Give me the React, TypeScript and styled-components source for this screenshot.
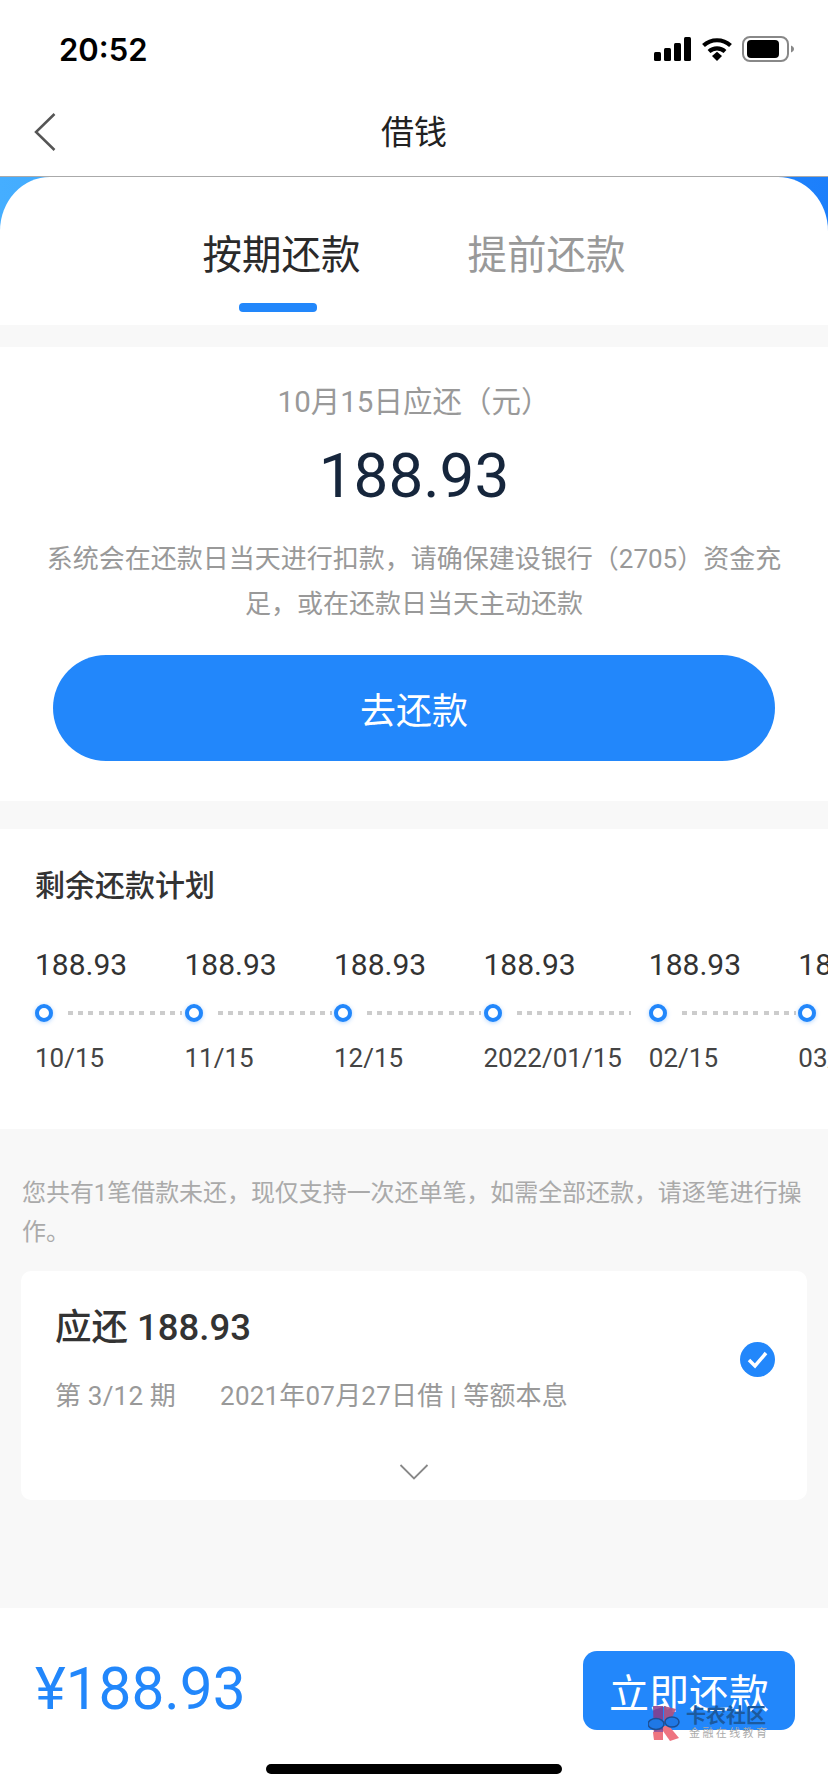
import styled, { createGlobalStyle } from "styled-components";

const BLUE = "#2287fb";
const FONT = `Roboto, "Noto Sans CJK SC", sans-serif`;

const GlobalStyle = createGlobalStyle`
	html, body {
		margin: 0;
		padding: 0;
		background: #fff;
	}

	body {
		font-family: ${FONT};
		overflow: hidden;
	}

	* {
		box-sizing: border-box;
	}
`;

const Page = styled.div`
	width: 828px;
	height: 1792px;
	display: flex;
	flex-direction: column;
	overflow: hidden;
	background: #f8f8f8;
`;

const StatusBar = styled.div`
	height: 88px;
	padding: 10px 34px 0 59px;
	display: flex;
	align-items: center;
	justify-content: space-between;
	background: #fff;
`;

const Time = styled.span`
	font-family: Inter, sans-serif;
	font-size: 31px;
	font-weight: 600;
	color: #000;
`;

const StatusIcons = styled.div`
	display: flex;
	align-items: center;
	gap: 9px;
`;

const NavBar = styled.div`
	height: 89px;
	padding-bottom: 1px;
	display: grid;
	grid-template-columns: 1fr auto 1fr;
	align-items: center;
	background: #fff;
	border-bottom: 1px solid #aaa;
`;

const BackIcon = styled.svg`
	margin-left: 34px;
`;

const NavTitle = styled.div`
	padding-bottom: 4px;
	font-size: 33px;
	color: #222;
`;

const Hero = styled.div`
	background: linear-gradient(90deg, #45aeff 0%, #1c7ffb 100%);
`;

const TabCard = styled.div`
	height: 148px;
	padding-top: 51px;
	display: flex;
	justify-content: center;
	gap: 107px;
	background: #fff;
	border-radius: 50px 50px 0 0 / 54px 54px 0 0;
`;

const Tab = styled.div`
	width: 158px;
	display: flex;
	flex-direction: column;
`;

const TabLabel = styled.span<{ $active?: boolean }>`
	font-size: 39.5px;
	line-height: 56px;
	white-space: nowrap;
	color: ${({ $active }) => ($active ? "#2a2a2a" : "#999")};
`;

const TabIndicator = styled.div`
	width: 78px;
	height: 9px;
	margin: 19px 0 0 36px;
	border-radius: 4px;
	background: ${BLUE};
`;

const RepaySection = styled.section`
	height: 454px;
	margin-top: 22px;
	padding-top: 34px;
	display: flex;
	flex-direction: column;
	align-items: center;
	background: #fff;
`;

const DueLabel = styled.div`
	font-size: 29.5px;
	line-height: 42px;
	color: #999;
`;

const DueAmount = styled.div`
	margin-top: 16px;
	font-size: 62px;
	line-height: 74px;
	color: #16263c;
`;

const Notice = styled.p`
	width: 744px;
	margin: 24px 0 0;
	font-size: 26px;
	line-height: 45px;
	text-align: center;
	color: #999;
`;

const PrimaryButton = styled.div`
	width: 722px;
	height: 106px;
	margin-top: 28px;
	display: flex;
	align-items: center;
	justify-content: center;
	font-size: 36px;
	color: #fff;
	border-radius: 53px;
	background: ${BLUE};
`;

const PlanSection = styled.section`
	height: 300px;
	margin-top: 28px;
	padding: 36px 0 0 35px;
	overflow: hidden;
	background: #fff;
`;

const PlanTitle = styled.div`
	font-size: 30px;
	line-height: 42px;
	font-weight: 500;
	color: #333;
`;

const Timeline = styled.div`
	margin-top: 40px;
	display: flex;
	width: 1000px;
`;

const TimelineItem = styled.div`
	flex: none;
	min-width: 149.5px;
`;

const ItemAmount = styled.div`
	font-size: 30px;
	line-height: 36px;
	color: #333;
`;

const DotRow = styled.div`
	margin-top: 21px;
	display: flex;
	align-items: center;
	gap: 15px;
`;

const Dot = styled.span`
	flex: none;
	width: 18px;
	height: 18px;
	border: 4px solid ${BLUE};
	border-radius: 50%;
	background: #fff;
	box-shadow: 0 1px 4px rgba(34, 135, 251, 0.35);
`;

const DotLine = styled.span`
	flex: none;
	width: 114px;
	height: 4px;
	background: repeating-linear-gradient(90deg, #ccc 0 5px, transparent 5px 10.2px);
`;

const ItemDate = styled.div`
	margin-top: 18px;
	padding-right: 27px;
	font-size: 26px;
	line-height: 36px;
	white-space: nowrap;
	color: #444;
`;

const LoanSection = styled.section`
	height: 479px;
	padding: 45px 21px 0 21px;
	background: #f8f8f8;
`;

const LoanNotice = styled.p`
	margin: 0 0 0 1px;
	font-size: 24px;
	line-height: 39px;
	letter-spacing: -0.06px;
	color: #aaa;
`;

const LoanCard = styled.div`
	position: relative;
	height: 229px;
	margin-top: 19px;
	padding: 33px 34px 0;
	border-radius: 10px;
	background: #fff;
`;

const LoanTitle = styled.div`
	font-size: 36.5px;
	line-height: 48px;
	font-weight: 500;
	color: #333;
`;

const LoanMeta = styled.div`
	margin-top: 26px;
	display: flex;
	gap: 44px;
	font-size: 26px;
	line-height: 36px;
	letter-spacing: 0.2px;
	color: #999;
`;

const CheckMark = styled.svg`
	position: absolute;
	top: 71px;
	right: 32px;
`;

const ExpandRow = styled.div`
	margin-top: 50px;
	display: flex;
	justify-content: center;
`;

const BottomBar = styled.div`
	position: relative;
	flex: 1;
	padding: 43px 33px 0 35px;
	display: flex;
	align-items: flex-start;
	justify-content: space-between;
	background: #fff;
`;

const TotalPrice = styled.div`
	margin-top: 1px;
	font-size: 58.5px;
	line-height: 74px;
	color: ${BLUE};
`;

const PayButton = styled.div`
	width: 212px;
	height: 79px;
	display: flex;
	align-items: center;
	justify-content: center;
	font-size: 40px;
	color: #fff;
	border-radius: 14px;
	background: ${BLUE};
`;

const Watermark = styled.div`
	position: absolute;
	top: 97px;
	left: 648px;
	display: flex;
	gap: 6px;
`;

const WatermarkText = styled.div`
	display: flex;
	flex-direction: column;
`;

const WatermarkName = styled.span`
	font-size: 20px;
	line-height: 22px;
	font-weight: 700;
	color: #1c5a9e;
`;

const WatermarkSlogan = styled.span`
	margin-left: 3px;
	font-size: 11px;
	line-height: 14px;
	letter-spacing: 2.4px;
	white-space: nowrap;
	color: #aaa;
`;

const HomeIndicator = styled.div`
	position: absolute;
	left: 266px;
	bottom: 18px;
	width: 296px;
	height: 10px;
	border-radius: 5px;
	background: #000;
`;

function SignalIcon() {
	return (
		<svg width="38" height="24" viewBox="0 0 38 24">
			<rect x="0" y="15" width="7" height="9" rx="1.5" fill="#000" />
			<rect x="10" y="11" width="7" height="13" rx="1.5" fill="#000" />
			<rect x="20" y="6" width="7" height="18" rx="1.5" fill="#000" />
			<rect x="30" y="0" width="7" height="24" rx="1.5" fill="#000" />
		</svg>
	);
}

function WifiIcon() {
	return (
		<svg width="32" height="24" viewBox="0 0 32 24">
			<path d="M2.5 8.5a20 20 0 0 1 27 0" fill="none" stroke="#000" strokeWidth="4.2" />
			<path d="M8 14.5a12 12 0 0 1 16 0" fill="none" stroke="#000" strokeWidth="4.2" />
			<path d="M11 19 16 14.8 21 19 16 24Z" fill="#000" />
		</svg>
	);
}

function BatteryIcon() {
	return (
		<svg width="52" height="26" viewBox="0 0 52 26">
			<rect x="1" y="1" width="45" height="24" rx="7" fill="none" stroke="#888" strokeWidth="2" />
			<rect x="5" y="4" width="32" height="18" rx="4" fill="#000" />
			<path d="M49 9.5c2 .8 3 2 3 3.5s-1 2.700-3 3.500Z" fill="#888" />
		</svg>
	);
}

function WatermarkLogo() {
	return (
		<svg width="32" height="36" viewBox="0 0 32 36">
			<path d="M5 1h10v34H6Z" fill="#8a3a86" fillOpacity="0.85" />
			<path d="M16 1l12 3-6 13h-6Z" fill="#b0507e" fillOpacity="0.9" />
			<path d="M15 21h6l10 12-9 3-7-10Z" fill="#ee7480" />
			<path d="M5 27h10v8H6Z" fill="#ee7480" />
			<ellipse cx="8" cy="19" rx="8" ry="5.500" fill="#1f78e6" stroke="#1c4f94" strokeWidth="1.500" />
			<ellipse cx="24" cy="17" rx="7" ry="5" fill="#1f78e6" stroke="#1c4f94" strokeWidth="1.500" />
		</svg>
	);
}

const PLAN = [
	{ date: "10/15" },
	{ date: "11/15" },
	{ date: "12/15" },
	{ date: "2022/01/15" },
	{ date: "02/15" },
	{ date: "03/15" },
];

function App() {
	return (
		<Page>
			<GlobalStyle />

			<StatusBar>
				<Time>20:52</Time>
				<StatusIcons>
					<SignalIcon />
					<WifiIcon />
					<BatteryIcon />
				</StatusIcons>
			</StatusBar>

			<NavBar>
				<BackIcon width="22" height="38" viewBox="0 0 22 38">
					<path d="M20.500 1 2 19l18.500 18" fill="none" stroke="#555" strokeWidth="2.500" />
				</BackIcon>
				<NavTitle>借钱</NavTitle>
			</NavBar>

			<Hero>
				<TabCard>
					<Tab>
						<TabLabel $active>按期还款</TabLabel>
						<TabIndicator />
					</Tab>
					<Tab>
						<TabLabel>提前还款</TabLabel>
					</Tab>
				</TabCard>
			</Hero>

			<RepaySection>
				<DueLabel>10月15日应还（元）</DueLabel>
				<DueAmount>188.93</DueAmount>
				<Notice>系统会在还款日当天进行扣款，请确保建设银行（2705）资金充足，或在还款日当天主动还款</Notice>
				<PrimaryButton>去还款</PrimaryButton>
			</RepaySection>

			<PlanSection>
				<PlanTitle>剩余还款计划</PlanTitle>
				<Timeline>
					{PLAN.map((item) => (
						<TimelineItem key={item.date}>
							<ItemAmount>188.93</ItemAmount>
							<DotRow>
								<Dot />
								<DotLine />
							</DotRow>
							<ItemDate>{item.date}</ItemDate>
						</TimelineItem>
					))}
				</Timeline>
			</PlanSection>

			<LoanSection>
				<LoanNotice>您共有1笔借款未还，现仅支持一次还单笔，如需全部还款，请逐笔进行操作。</LoanNotice>
				<LoanCard>
					<LoanTitle>应还 188.93</LoanTitle>
					<LoanMeta>
						<span>第 3/12 期</span>
						<span>2021年07月27日借 | 等额本息</span>
					</LoanMeta>
					<CheckMark width="35" height="35" viewBox="0 0 35 35">
						<circle cx="17.500" cy="17.500" r="17.500" fill={BLUE} />
						<path d="M9 18l6 6 11-13" fill="none" stroke="#fff" strokeWidth="3.500" />
					</CheckMark>
					<ExpandRow>
						<svg width="30" height="16" viewBox="0 0 30 16">
							<path d="M1.500 1 15 14.500 28.500 1" fill="none" stroke="#888" strokeWidth="1.800" />
						</svg>
					</ExpandRow>
				</LoanCard>
			</LoanSection>

			<BottomBar>
				<TotalPrice>¥188.93</TotalPrice>
				<PayButton>立即还款</PayButton>
				<Watermark>
					<WatermarkLogo />
					<WatermarkText>
						<WatermarkName>卡农社区</WatermarkName>
						<WatermarkSlogan>金融在线教育</WatermarkSlogan>
					</WatermarkText>
				</Watermark>
				<HomeIndicator />
			</BottomBar>
		</Page>
	);
}

export default App;
